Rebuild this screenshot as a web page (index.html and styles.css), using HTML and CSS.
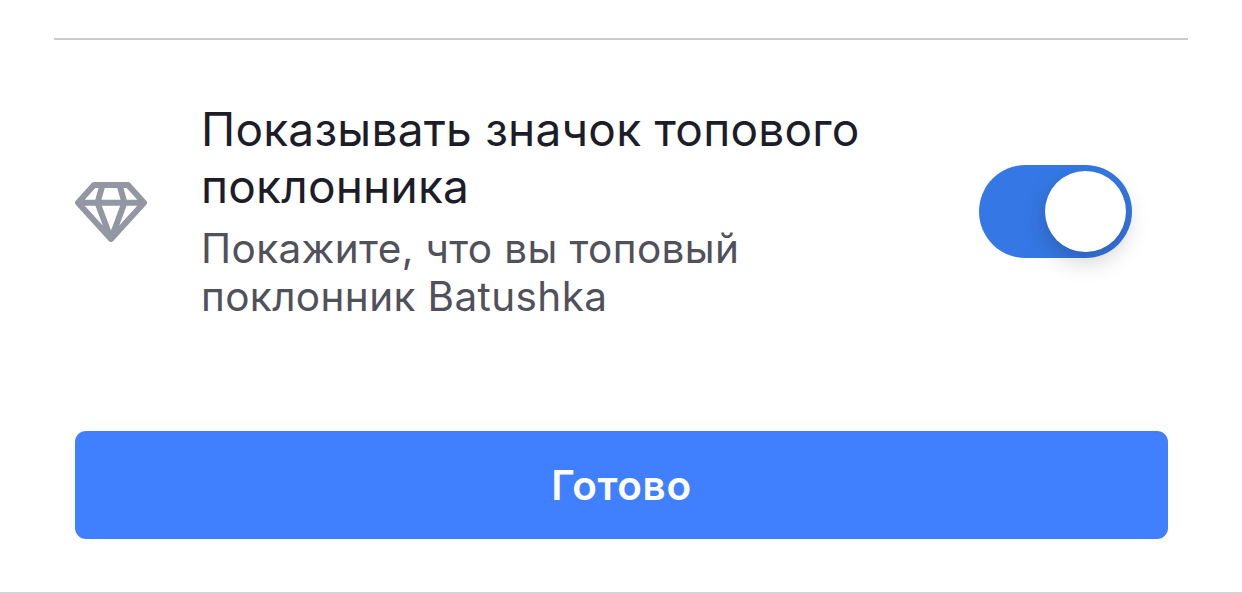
FILE: index.html
```html
<!DOCTYPE html>
<html lang="ru">
<head>
	<meta charset="utf-8">
	<title>Значок топового поклонника</title>
	<link rel="stylesheet" href="styles.css">
</head>
<body>
	<div class="sheet">
		<hr class="divider">
		<div class="row">
			<svg class="diamond" viewBox="0 0 72 60">
				<path d="M19 3H53L69 20.7L36 57L3 20.7ZM3 20.7H69M27.5 3L22.5 20.7L36 57L49.5 20.7L44.5 3" />
			</svg>
			<div class="rowText">
				<div class="title">Показывать значок топового<br>поклонника</div>
				<div class="desc">Покажите, что вы топовый<br>поклонник Batushka</div>
			</div>
			<button class="toggle" role="switch" aria-checked="true"><span class="knob"></span></button>
		</div>
		<button class="btn">Готово</button>
	</div>
</body>
</html>
```

FILE: styles.css
```css
html, body {
	margin: 0;
	background: #fff;
	font-family: Inter, "Liberation Sans", sans-serif;
}
.sheet {
	box-sizing: border-box;
	height: 593px;
	padding-top: 38px;
	border-bottom: 1px solid #d6d6d8;
}
.divider {
	height: 2px;
	margin: 0 54px;
	border: none;
	background: #cacacc;
}
.row {
	display: flex;
	height: 391px;
	padding: 0 110px 0 75px;
}
.diamond {
	width: 72px;
	height: 60px;
	margin-top: 142px;
	fill: none;
	stroke: #9297a3;
	stroke-width: 6;
	stroke-linejoin: round;
}
.rowText {
	flex: 1;
	margin-left: 54px;
	padding-top: 61px;
	white-space: nowrap;
}
.title {
	color: #1c1d28;
	font-size: 46px;
	line-height: 57px;
	letter-spacing: .22px;
}
.desc {
	margin-top: 10px;
	color: #50515b;
	font-size: 40.5px;
	line-height: 48px;
	letter-spacing: .38px;
}
.toggle {
	width: 153px;
	height: 93px;
	margin-top: 125px;
	padding: 6px;
	border: none;
	border-radius: 47px;
	background: #3578e5;
}
.knob {
	display: block;
	width: 81px;
	height: 81px;
	margin-left: auto;
	border-radius: 50%;
	background: #fff;
	box-shadow: 0 9px 24px rgba(0, 0, 0, .2);
}
.btn {
	display: block;
	width: 1093px;
	height: 108px;
	margin-left: 75px;
	border: none;
	border-radius: 11px;
	background: #4080ff;
	color: #fff;
	font-family: inherit;
	font-size: 40.5px;
	font-weight: 600;
	letter-spacing: .6px;
}
```
